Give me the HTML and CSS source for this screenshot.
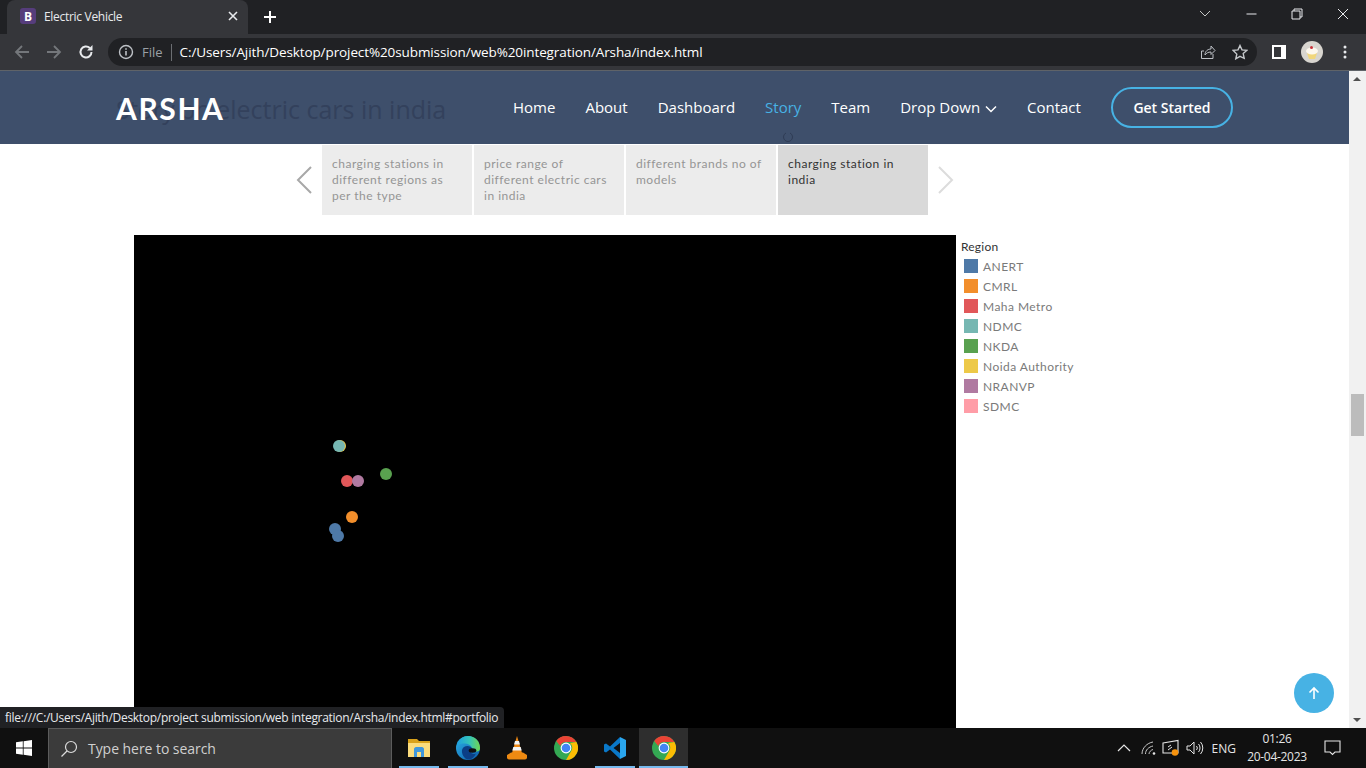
FILE: index.html
```html
<!DOCTYPE html>
<html lang="en">
<head>
  <meta charset="UTF-8">
  <title>Electric Vehicle</title>
  <link rel="stylesheet" href="styles.css">
</head>
<body>
  <div class="tabstrip">
    <div class="tab">
      <span class="favicon">B</span>
      <span class="tab-title">Electric Vehicle</span>
      <svg class="tab-close" width="10" height="10" viewBox="0 0 10 10"><path d="M1 1l8 8M9 1l-8 8" stroke="#e8eaed" stroke-width="1.6"/></svg>
    </div>
    <svg class="new-tab" width="14" height="14" viewBox="0 0 14 14"><path d="M7 1v12M1 7h12" stroke="#fff" stroke-width="2"/></svg>
    <div class="win-controls">
      <svg width="12" height="8" viewBox="0 0 12 8"><path d="M1 1l5 5 5-5" fill="none" stroke="#c4c7c5" stroke-width="1"/></svg>
      <svg width="12" height="12" viewBox="0 0 12 12"><path d="M1.5 6h10" stroke="#e8eaed" stroke-width="1"/></svg>
      <svg width="12" height="12" viewBox="0 0 12 12"><path d="M3 3V1h8v8H9M1 3h8v8H1z" fill="none" stroke="#e8eaed" stroke-width="1"/></svg>
      <svg width="12" height="12" viewBox="0 0 12 12"><path d="M1 1l10 10M11 1L1 11" stroke="#e8eaed" stroke-width="1"/></svg>
    </div>
  </div>

  <div class="toolbar">
    <svg class="nav-btn" width="16" height="16" viewBox="0 0 16 16"><path d="M15 8H2M8 2L2 8l6 6" fill="none" stroke="#74777b" stroke-width="1.8"/></svg>
    <svg class="nav-btn" width="16" height="16" viewBox="0 0 16 16"><path d="M1 8h13M8 2l6 6-6 6" fill="none" stroke="#74777b" stroke-width="1.8"/></svg>
    <svg class="nav-btn" width="16" height="16" viewBox="0 0 16 16"><path d="M13.5 8a5.5 5.5 0 1 1-1.7-4" fill="none" stroke="#e8eaed" stroke-width="2"/><path d="M14.5 1v5.5H9z" fill="#e8eaed"/></svg>
    <div class="omnibox">
      <svg width="16" height="16" viewBox="0 0 16 16"><circle cx="8" cy="8" r="6.5" fill="none" stroke="#bdc1c6" stroke-width="1.4"/><path d="M8 7v4.5M8 4.3v1.5" stroke="#bdc1c6" stroke-width="1.6"/></svg>
      <span class="scheme">File</span>
      <span class="url">C:/Users/Ajith/Desktop/project%20submission/web%20integration/Arsha/index.html</span>
      <svg class="share" width="16" height="16" viewBox="0 0 16 16"><path d="M13 10v4.5H1.500V7H4M5 11c0-4 3-6 6-6V2l4 4.500-4 4V8c-3 0-4.500 1-6 3z" fill="none" stroke="#bdc1c6" stroke-width="1"/></svg>
      <svg class="star" width="16" height="16" viewBox="0 0 16 16"><path d="M8 1.500l2 4.400 4.800.5-3.600 3.200 1 4.700L8 12.400l-4.200 2.400 1-4.700L1.200 6.400 6 5.900z" fill="none" stroke="#c6c9cc" stroke-width="1.4"/></svg>
    </div>
    <svg class="panel-btn" width="14" height="14" viewBox="0 0 14 14"><path d="M0 0h14v14H0z" fill="#fff"/><path d="M2 2h7v10H2z" fill="#35363a"/></svg>
    <svg class="avatar" width="22" height="22" viewBox="0 0 22 22"><circle cx="11" cy="11" r="11" fill="#d8d5cf"/><path d="M6 12h10l-2 6H8z" fill="#f1d77c"/><ellipse cx="11" cy="10" rx="6" ry="3.5" fill="#fdf8ee"/><circle cx="10.500" cy="6.500" r="1.5" fill="#c8323a"/></svg>
    <svg class="menu-btn" width="4" height="14" viewBox="0 0 4 14"><circle cx="2" cy="2" r="1.5" fill="#e8eaed"/><circle cx="2" cy="7" r="1.5" fill="#e8eaed"/><circle cx="2" cy="12" r="1.5" fill="#e8eaed"/></svg>
  </div>

  <div class="viewport">
    <div class="page">
      <header class="site-header">
        <span class="story-title"><span class="story-prefix">Story on </span>electric cars in india</span>
        <span class="logo">ARSHA</span>
        <nav class="site-nav">
          <a href="#">Home</a>
          <a href="#">About</a>
          <a href="#">Dashboard</a>
          <a href="#" class="current">Story</a>
          <a href="#">Team</a>
          <a href="#" class="dropdown">Drop Down
            <svg width="12" height="8" viewBox="0 0 12 8"><path d="M1 1.5l5 5 5-5" fill="none" stroke="#fff" stroke-width="1.5"/></svg>
          </a>
          <a href="#">Contact</a>
          <a href="#" class="get-started">Get Started</a>
        </nav>
        <svg class="spinner" width="12" height="12" viewBox="0 0 12 12"><path d="M4 2a4.5 4.5 0 1 0 4 0" fill="none" stroke="#2f3c55" stroke-width="1"/></svg>
      </header>

      <div class="story-nav">
        <svg class="arrow" width="16" height="28" viewBox="0 0 16 28"><path d="M15 1L2 14l13 13" fill="none" stroke="#a8a8a8" stroke-width="2"/></svg>
        <div class="story-point">charging stations in different regions as per the type</div>
        <div class="story-point">price range of different electric cars in india</div>
        <div class="story-point">different brands no of models</div>
        <div class="story-point selected">charging station in india</div>
        <svg class="arrow" width="16" height="28" viewBox="0 0 16 28"><path d="M1 1l13 13L1 27" fill="none" stroke="#dcdcdc" stroke-width="2"/></svg>
      </div>

      <div class="viz">
        <div class="map">
          <span class="dot anert" style="left: 195px; top: 288px"></span>
          <span class="dot anert" style="left: 198px; top: 295px"></span>
          <span class="dot cmrl" style="left: 211.5px; top: 275.5px"></span>
          <span class="dot maha" style="left: 207px; top: 240px"></span>
          <span class="dot nranvp" style="left: 218px; top: 240px"></span>
          <span class="dot nkda" style="left: 246px; top: 233px"></span>
          <span class="dot noida" style="left: 199.7px; top: 205px"></span>
          <span class="dot ndmc" style="left: 199px; top: 205px"></span>
        </div>
        <div class="legend">
          <div class="legend-title">Region</div>
          <div class="legend-row"><span class="swatch anert"></span>ANERT</div>
          <div class="legend-row"><span class="swatch cmrl"></span>CMRL</div>
          <div class="legend-row"><span class="swatch maha"></span>Maha Metro</div>
          <div class="legend-row"><span class="swatch ndmc"></span>NDMC</div>
          <div class="legend-row"><span class="swatch nkda"></span>NKDA</div>
          <div class="legend-row"><span class="swatch noida"></span>Noida Authority</div>
          <div class="legend-row"><span class="swatch nranvp"></span>NRANVP</div>
          <div class="legend-row"><span class="swatch sdmc"></span>SDMC</div>
        </div>
      </div>

      <div class="status-bubble">file:///C:/Users/Ajith/Desktop/project submission/web integration/Arsha/index.html#portfolio</div>
      <a href="#" class="back-to-top">
        <svg width="14" height="14" viewBox="0 0 14 14"><path d="M7 13V2M2.500 6.500L7 2l4.500 4.500" fill="none" stroke="#fff" stroke-width="1.6"/></svg>
      </a>
    </div>

    <div class="scrollbar">
      <span class="scroll-up"></span>
      <span class="scroll-thumb"></span>
      <span class="scroll-down"></span>
    </div>
  </div>

  <footer class="taskbar">
    <svg class="start" width="16" height="16" viewBox="0 0 16 16"><path d="M0 2.300l6.800-1v6.300H0zM7.600 1.200L16 0v7.600H7.600zM0 8.400h6.800v6.300L0 13.700zM7.600 8.400H16V16l-8.400-1.200z" fill="#fff"/></svg>
    <div class="search-box">
      <svg width="18" height="18" viewBox="0 0 18 18"><circle cx="11" cy="7" r="5.5" fill="none" stroke="#dcdcdc" stroke-width="1.2"/><path d="M7 11l-5.500 5.500" stroke="#dcdcdc" stroke-width="1.3"/></svg>
      <span>Type here to search</span>
    </div>
    <div class="task-icon open">
      <svg width="22" height="20" viewBox="0 0 22 20"><path d="M0 1h9l2 2h11v3H0z" fill="#d9a21b"/><path d="M0 5h22v14H0z" fill="#fbdc7c"/><path d="M6 11c0-1 1-2 2-2h6c1 0 2 1 2 2v8h-3v-5H9v5H6z" fill="#3f97dc"/></svg>
    </div>
    <div class="task-icon open">
      <svg width="24" height="24" viewBox="0 0 24 24">
        <defs>
          <linearGradient id="edge-body" x1="0" y1="0" x2="1" y2="1"><stop offset="0" stop-color="#2cb0e6"/><stop offset="1" stop-color="#0c5ba8"/></linearGradient>
          <linearGradient id="edge-top" x1="0" y1="0" x2="1" y2="0"><stop offset="0" stop-color="#1d9fe0"/><stop offset="0.55" stop-color="#35c5b8"/><stop offset="1" stop-color="#72d64f"/></linearGradient>
        </defs>
        <circle cx="12" cy="12" r="12" fill="url(#edge-body)"/>
        <path d="M1 8C3 3 7 0 12 0c7 0 12 5 12 12 0 2-1 3.500-3.500 3.500H15c1-1 1.500-2 1-3.500-1-3-4-4.500-7.500-4.500C6 7.500 3 8 1 10z" fill="url(#edge-top)"/>
        <path d="M8 11c3-2 7-1 8 1.500 .5 2-.5 3.500-1 4 1 1.500 3 2 5 1-2 4-5 6.500-8.500 6-3-1-5-4-5.500-7C5.500 14 6.500 12 8 11z" fill="#0b3f86"/>
        <ellipse cx="16.500" cy="14.500" rx="3.800" ry="2.200" fill="#101010"/>
      </svg>
    </div>
    <div class="task-icon">
      <svg width="20" height="24" viewBox="0 0 20 24"><path d="M10 0l5 17H5z" fill="#f08a14"/><path d="M8 5h4l1 3.500H7zM6.300 11h7.400l1 3.500H5.300z" fill="#f4f4f4"/><path d="M0 19l4-2.500h12l4 2.500v2.500a2 2 0 0 1-2 2H2a2 2 0 0 1-2-2z" fill="#ee8a12"/></svg>
    </div>
    <div class="task-icon"><svg width="24" height="24" viewBox="0 0 24 24"><use href="#chrome"/></svg></div>
    <div class="task-icon open">
      <svg width="24" height="24" viewBox="0 0 24 24"><path d="M17 1L7 10.500 3 7.500 1 8.500v7l2 1 4-3L17 23v-6l-6.500-5L17 7z" fill="#0a78c8"/><path d="M17 1l6 3v16l-6 3z" fill="#2aa6ee"/></svg>
    </div>
    <div class="task-icon open active">
      <svg width="24" height="24" viewBox="0 0 24 24">
        <g id="chrome">
          <circle cx="12" cy="12" r="12" fill="#34a853"/>
          <path d="M12 0a12 12 0 0 1 10.400 6H12a6 6 0 0 0-5.700 4L2.200 5A12 12 0 0 1 12 0z" fill="#ea4335"/>
          <path d="M22.400 6A12 12 0 0 1 12 24l5.200-9A6 6 0 0 0 16 7z" fill="#fbbc04"/>
          <circle cx="12" cy="12" r="5.4" fill="#fff"/>
          <circle cx="12" cy="12" r="4.3" fill="#4285f4"/>
        </g>
      </svg>
    </div>

    <div class="tray">
      <svg width="14" height="8" viewBox="0 0 14 8"><path d="M1 7l6-6 6 6" fill="none" stroke="#e6e6e6" stroke-width="1.2"/></svg>
      <svg class="tray-wifi" width="16" height="14" viewBox="0 0 16 14"><path d="M1 13C1 7 6 2 12 1M4.500 13c0-4 3-7 7.500-8M8 13c0-2 2-4 4-4.500" fill="none" stroke="#c8c8c8" stroke-width="1"/><circle cx="13" cy="12.500" r="1.3" fill="#e6e6e6"/></svg>
      <svg class="tray-update" width="18" height="18" viewBox="0 0 18 18"><path d="M1 4l15-2.500V14H1z" fill="none" stroke="#e6e6e6" stroke-width="1.1"/><path d="M6 8l3-2M6 11l4-3" stroke="#e6e6e6"/><circle cx="13" cy="13.500" r="3.3" fill="#f7930e"/></svg>
      <svg class="tray-sound" width="18" height="14" viewBox="0 0 18 14"><path d="M1 5h3l4-4v12l-4-4H1z" fill="none" stroke="#e6e6e6"/><path d="M10.500 5a3 3 0 0 1 0 4M12.500 3a6 6 0 0 1 0 8M14.500 1a9 9 0 0 1 0 12" fill="none" stroke="#e6e6e6"/></svg>
      <span class="tray-lang">ENG</span>
      <div class="clock"><span>01:26</span><span>20-04-2023</span></div>
      <svg class="tray-notify" width="17" height="16" viewBox="0 0 17 16"><path d="M1 1h15v11h-5l-2.500 2.500L6 12H1z" fill="none" stroke="#e6e6e6" stroke-width="1.1"/></svg>
    </div>
  </footer>
</body>
</html>
```

FILE: styles.css
```css
* {
  box-sizing: border-box;
}

html, body {
  margin: 0;
  height: 100%;
  overflow: hidden;
}

body {
  display: flex;
  flex-direction: column;
  font-family: "Open Sans", "Liberation Sans", sans-serif;
  background-color: #fff;
}

/* browser chrome */
.tabstrip {
  display: flex;
  align-items: flex-end;
  height: 34px;
  padding-left: 7px;
  background-color: #202124;
  flex-shrink: 0;
}

.tab {
  display: flex;
  align-items: center;
  width: 241px;
  height: 34px;
  padding: 0 10px 2px 13px;
  background-color: #35363a;
  border-radius: 8px 8px 0 0;
}

.favicon {
  display: flex;
  align-items: center;
  justify-content: center;
  width: 16px;
  height: 16px;
  background-color: #563d7c;
  border-radius: 3px;
  color: #fff;
  font-size: 12px;
  font-weight: 700;
}

.tab-title {
  flex: 1;
  margin-left: 8px;
  color: #e8eaed;
  font-size: 12px;
  letter-spacing: -0.3px;
}

.new-tab {
  margin: 0 0 10px 15px;
}

.win-controls {
  display: flex;
  align-items: center;
  gap: 34px;
  margin-left: auto;
  margin-right: 17px;
  height: 28px;
  align-self: flex-start;
}

.toolbar {
  display: flex;
  align-items: center;
  height: 37px;
  padding-left: 14px;
  background-color: #35363a;
  border-bottom: 1px solid #5f6368;
  flex-shrink: 0;
}

.nav-btn {
  margin-right: 16px;
}

.omnibox {
  display: flex;
  align-items: center;
  width: 1149px;
  height: 28px;
  margin-left: -2px;
  padding-left: 10px;
  background-color: #202124;
  border-radius: 14px;
}

.scheme {
  margin-left: 8px;
  padding-right: 8px;
  border-right: 1px solid #6b6e72;
  color: #9aa0a6;
  font-size: 13px;
  line-height: 17px;
}

.url {
  margin-left: 8px;
  color: #fff;
  font-size: 13.5px;
  letter-spacing: -0.1px;
}

.share {
  margin-left: auto;
}

.star {
  margin: 0 9px 0 16px;
}

.panel-btn {
  margin-left: 15px;
}

.avatar {
  margin-left: 15px;
}

.menu-btn {
  margin-left: 20px;
}

/* page */
.viewport {
  display: flex;
  flex: 1;
  min-height: 0;
}

.page {
  position: relative;
  flex: 1;
  min-width: 0;
  overflow: hidden;
}

.site-header {
  position: relative;
  display: flex;
  align-items: center;
  height: 73px;
  padding: 0 116px;
  background-color: #3e4f6b;
}

.story-title {
  position: absolute;
  left: 116px;
  top: 21px;
  color: #33415c;
  font-size: 25px;
  white-space: nowrap;
}

.story-prefix {
  letter-spacing: -0.4px;
}

.logo {
  position: relative;
  color: #fff;
  font-family: Lato, "Liberation Sans", sans-serif;
  font-size: 30px;
  font-weight: 700;
  letter-spacing: 1.6px;
}

.site-nav {
  display: flex;
  align-items: center;
  gap: 30px;
  margin-left: auto;
}

.site-nav a {
  padding-bottom: 2px;
  color: #fff;
  font-size: 15px;
  font-weight: 500;
  text-decoration: none;
}

.site-nav a.current {
  color: #47b2e4;
}

.dropdown svg {
  margin-left: 1px;
}

.site-nav a.get-started {
  padding: 9px 20.5px;
  border: 2px solid #47b2e4;
  border-radius: 50px;
  font-size: 14px;
  font-weight: 600;
}

.spinner {
  position: absolute;
  left: 782px;
  top: 60px;
}

.story-nav {
  display: flex;
  align-items: center;
  gap: 2px;
  height: 70px;
  margin-top: 1px;
  padding-left: 322px;
}

.arrow {
  flex-shrink: 0;
}

.arrow:first-child {
  margin-left: -26px;
  margin-right: 8px;
}

.arrow:last-child {
  margin-left: 8px;
}

.story-point {
  width: 150px;
  height: 70px;
  padding: 11px 10px;
  background-color: #ececec;
  color: #959595;
  font-family: Lato, "Open Sans", sans-serif;
  font-size: 12px;
  line-height: 16px;
  letter-spacing: 0.5px;
}

.story-point.selected {
  background-color: #d9d9d9;
  color: #333;
}

.viz {
  display: flex;
  margin-top: 20px;
  padding-left: 134px;
}

.map {
  position: relative;
  width: 822px;
  height: 493px;
  background-color: #000;
}

.dot {
  position: absolute;
  width: 12px;
  height: 12px;
  border-radius: 50%;
}

.legend {
  padding: 4px 0 0 5px;
  color: #7a7a7a;
  font-family: Lato, "Open Sans", sans-serif;
  font-size: 12px;
  letter-spacing: 0.45px;
}

.legend-title {
  margin-bottom: 1px;
  color: #333;
  line-height: 16px;
  letter-spacing: 0.2px;
}

.legend-row {
  display: flex;
  align-items: center;
  height: 20px;
}

.swatch {
  width: 14px;
  height: 14px;
  margin: 0 5px 0 3px;
}

.anert { background-color: #4e79a7; }
.cmrl { background-color: #f28e2b; }
.maha { background-color: #e15759; }
.ndmc { background-color: #76b7b2; }
.nkda { background-color: #59a14f; }
.noida { background-color: #edc948; }
.nranvp { background-color: #b07aa1; }
.sdmc { background-color: #ff9da7; }

.status-bubble {
  position: absolute;
  left: 0;
  bottom: 0;
  height: 21px;
  padding: 0 6px 0 5px;
  background-color: #202124;
  border-radius: 0 4px 0 0;
  color: #e8eaed;
  font-size: 12px;
  line-height: 21px;
  letter-spacing: -0.29px;
  white-space: nowrap;
}

.back-to-top {
  position: absolute;
  right: 15px;
  bottom: 15px;
  display: flex;
  align-items: center;
  justify-content: center;
  width: 40px;
  height: 40px;
  background-color: #47b2e4;
  border-radius: 50%;
}

.scrollbar {
  position: relative;
  width: 17px;
  background-color: #f1f1f1;
}

.scroll-up, .scroll-down {
  position: absolute;
  left: 4px;
  width: 0;
  height: 0;
  border-left: 4px solid transparent;
  border-right: 4px solid transparent;
}

.scroll-up {
  top: 6px;
  border-bottom: 4px solid #505050;
}

.scroll-down {
  bottom: 6px;
  border-top: 4px solid #505050;
}

.scroll-thumb {
  position: absolute;
  left: 2px;
  right: 2px;
  top: 323px;
  height: 42px;
  background-color: #bcbcbc;
}

/* windows taskbar */
.taskbar {
  display: flex;
  align-items: center;
  height: 40px;
  background-color: #101010;
  flex-shrink: 0;
}

.start {
  margin: 0 16px;
}

.search-box {
  display: flex;
  align-items: center;
  gap: 10px;
  width: 344px;
  height: 40px;
  padding-left: 11px;
  background-color: #3b3b3b;
  border: 1px solid #5c5c5c;
  border-bottom: none;
  color: #d0d0d0;
  font-size: 14px;
  letter-spacing: -0.05px;
}

.task-icon {
  display: flex;
  align-items: center;
  justify-content: center;
  width: 49px;
  height: 40px;
}

.search-box + .task-icon {
  margin-left: 2px;
}

.task-icon.open {
  background: linear-gradient(#76b9ed, #76b9ed) center bottom / 40px 2px no-repeat;
}

.task-icon.active {
  background: linear-gradient(#76b9ed, #76b9ed) center bottom / 100% 2px no-repeat, #2e2e2e;
}

.tray {
  display: flex;
  align-items: center;
  margin-left: auto;
  height: 40px;
  color: #e6e6e6;
  font-size: 12px;
}

.tray-wifi { margin-left: 10px; }
.tray-update { margin-left: 5px; }
.tray-sound { margin-left: 6px; }
.tray-lang { margin-left: 8px; }

.clock {
  display: flex;
  flex-direction: column;
  align-items: center;
  width: 74px;
  margin-left: 4px;
  line-height: 18px;
  letter-spacing: -0.3px;
}

.tray-notify {
  margin: 0 25px 0 10px;
}
```
